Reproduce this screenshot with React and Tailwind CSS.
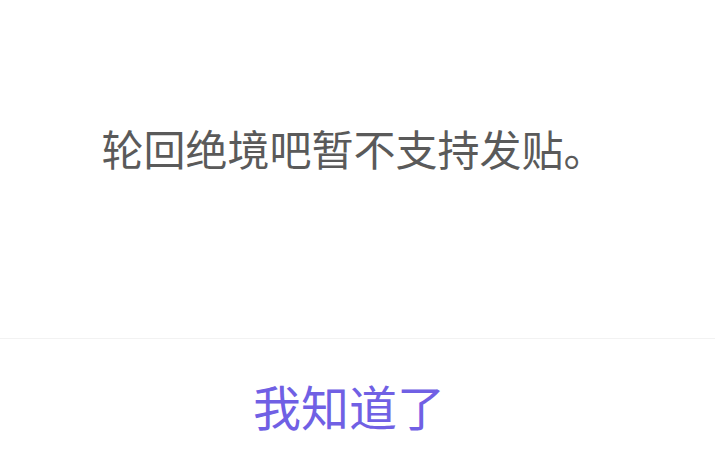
import React from 'react';

const App = () => {
    const font = { fontFamily: '"Noto Sans CJK SC", "Noto Sans", sans-serif' };
    return (
        <div className="w-[715px] h-[464px] bg-white flex flex-col" style={font}>
            <div className="h-[338px] flex justify-center pt-[118px] pr-[8px]">
                <div className="text-[42px] leading-[60px] text-[#5a5a5a]">轮回绝境吧暂不支持发贴。</div>
            </div>
            <div className="h-px bg-[#f2f2f2]"></div>
            <div className="flex-1 flex justify-center pt-[34px] pr-[17px]">
                <div className="text-[48px] leading-[64px] text-[#7060e4]">我知道了</div>
            </div>
        </div>
    )
}

export default App
